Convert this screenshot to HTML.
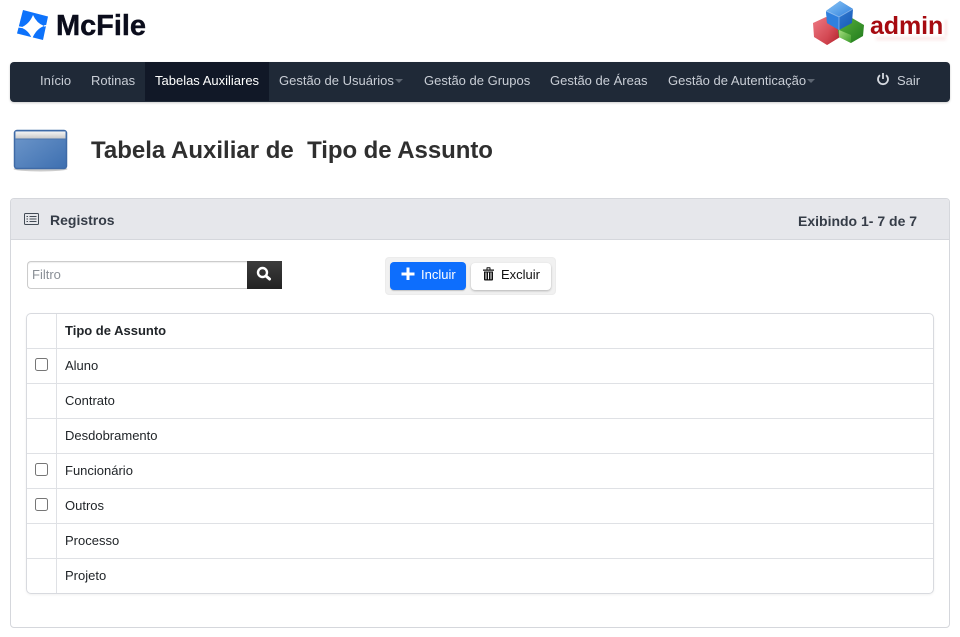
<!DOCTYPE html>
<html lang="pt"><head><meta charset="utf-8"><title>Tabela Auxiliar</title>
<style>
*{box-sizing:border-box}
html,body{margin:0;padding:0;width:960px;height:637px;overflow:hidden;background:#fff;font-family:"Liberation Sans",Arial,sans-serif;color:#212529}
.a{position:absolute;white-space:nowrap}
.nav{left:10px;top:62px;width:940px;height:40px;background:#1f2937;border-radius:4px;box-shadow:0 1px 2px rgba(0,0,0,.2)}
.n{top:62px;height:38px;line-height:37px;font-size:13px;color:#c9ced6}
.caret{display:inline-block;width:0;height:0;border:4.500px solid transparent;border-top:4px solid #5d6672;border-bottom:0;vertical-align:2px;margin-left:1px}
.panel{left:10px;top:198px;width:940px;height:430px;border:1px solid #d5d7dc;border-radius:4px}
.phead{left:11px;top:199px;width:938px;height:41px;background:#e6e7eb;border-bottom:1px solid #d5d7dc;border-radius:3px 3px 0 0}
.tbl{left:26px;top:313px;width:908px;height:281px;border:1px solid #d8dadf;border-radius:5px;box-shadow:0 1px 2px rgba(0,0,0,.06)}
.l{left:27px;width:906px;height:1px;background:#dfe1e5}
.c{left:65px;font-size:13px;line-height:16px;color:#212529}
.cb{left:35px;width:13px;height:13px;border:1px solid #767676;border-radius:2.500px;background:#fff}
</style></head><body>

<svg class="a" style="left:16px;top:9px" width="33" height="33" viewBox="0 0 33 33">
<path fill="#0d72fb" d="M7 1 L32 7.500 L27 31 L1 24.500 Z"/>
<path fill="#fff" d="M17 6 Q20.500 14 28 17 Q20 20 16 30 Q13 21.500 5 18.500 Q13.500 15 17 6 Z"/>
<path fill="none" stroke="#fff" stroke-width="1.200" d="M0 17.500 L6 18.500 M16 30 L15 33 M28 17 L33 16"/>
</svg>
<div class="a" style="left:56px;top:10px;font-size:29px;line-height:32px;font-weight:700;color:#0b0d1c;letter-spacing:-.05px;-webkit-text-stroke:.4px #0b0d1c">McFile</div>

<svg class="a" style="left:811px;top:0" width="58" height="47" viewBox="0 0 58 47">
<defs>
<linearGradient id="r" x1="0" y1="0" x2="1" y2="1"><stop offset="0" stop-color="#ee7a84"/><stop offset="1" stop-color="#c22a35"/></linearGradient>
<linearGradient id="r2" x1="0" y1="0" x2="1" y2="1"><stop offset="0" stop-color="#e35c66"/><stop offset="1" stop-color="#b01f2a"/></linearGradient>
<linearGradient id="g" x1="0" y1="0" x2="1" y2="1"><stop offset="0" stop-color="#a4dc7e"/><stop offset="1" stop-color="#3c9c2a"/></linearGradient>
<linearGradient id="g2" x1="0" y1="0" x2="1" y2="1"><stop offset="0" stop-color="#5bb23e"/><stop offset="1" stop-color="#1f7a1c"/></linearGradient>
<linearGradient id="b" x1="0" y1="0" x2="1" y2="1"><stop offset="0" stop-color="#8cc6f5"/><stop offset="1" stop-color="#2f80de"/></linearGradient>
<linearGradient id="b2" x1="0" y1="0" x2="1" y2="1"><stop offset="0" stop-color="#3f8fe4"/><stop offset="1" stop-color="#1758b4"/></linearGradient>
</defs>
<path fill="url(#r)" d="M2 23 L15 17 L29 24 L29 37 L16 45 L3 37 Z"/>
<path fill="url(#r2)" d="M16 31 L29 24 L29 37 L16 45 Z"/>
<path fill="url(#g2)" d="M27 30 L41 18 L53 25 L52 36 L40 43 L28 37 Z"/>
<path fill="url(#g)" d="M28 30 L40 35 L40 43 L28 37 Z"/>
<path fill="url(#b2)" d="M15 11 L29 1 L42 9 L41 23 L28 30 L16 23 Z"/>
<path fill="url(#b)" d="M15 11 L29 1 L42 9 L28 17 Z"/>
<path fill="#2f80de" d="M15 11 L28 17 L28 30 L16 23 Z"/>
<path fill="none" stroke="#fff" stroke-opacity=".35" d="M15 11 L28 17 L42 9 M28 17 V30"/>
</svg>
<div class="a" style="left:876px;top:37px;width:70px;height:3px;background:#f6c9c9;filter:blur(1.500px);opacity:.5"></div>
<div class="a" style="left:945px;top:20px;width:2px;height:16px;background:#f6c9c9;filter:blur(1px);opacity:.5"></div>
<div class="a" style="left:870px;top:10px;font-size:25px;line-height:32px;font-weight:700;color:#a60a10;letter-spacing:-.1px">admin</div>

<div class="a nav"></div>
<div class="a" style="left:145px;top:62px;width:124px;height:39px;background:#111827"></div>
<div class="a n" style="left:40px">Início</div>
<div class="a n" style="left:91px">Rotinas</div>
<div class="a n" style="left:155px;color:#fff">Tabelas Auxiliares</div>
<div class="a n" style="left:279px">Gestão de Usuários<span class="caret"></span></div>
<div class="a n" style="left:424px">Gestão de Grupos</div>
<div class="a n" style="left:550px">Gestão de Áreas</div>
<div class="a n" style="left:668px">Gestão de Autenticação<span class="caret"></span></div>
<svg class="a" style="left:876px;top:72px" width="14" height="14" viewBox="0 0 14 14" fill="none" stroke="#d5d9df" stroke-width="1.800"><path d="M4 3.200 A5 5 0 1 0 10 3.200"/><path d="M7 1 V7"/></svg>
<div class="a n" style="left:897px">Sair</div>

<svg class="a" style="left:12px;top:128px" width="57" height="44" viewBox="0 0 57 44">
<defs>
<linearGradient id="w" x1="0" y1="0" x2="1" y2="1"><stop offset="0" stop-color="#6f98cb"/><stop offset="1" stop-color="#3d6fb0"/></linearGradient>
<linearGradient id="t" x1="0" y1="0" x2="0" y2="1"><stop offset="0" stop-color="#f4f4f4"/><stop offset="1" stop-color="#c9c9c9"/></linearGradient>
</defs>
<ellipse cx="28.500" cy="41" rx="27" ry="2.500" fill="#aaa" opacity=".6"/>
<rect x="2.500" y="2.500" width="52" height="38" rx="2.500" fill="url(#w)" stroke="#3f6aa6" stroke-width="1.500"/>
<rect x="3.500" y="3.500" width="50" height="7" fill="url(#t)"/>
<path d="M3.500 11 H53.500" stroke="#4a74ae"/>
</svg>
<div class="a" style="left:91px;top:136px;font-size:24px;line-height:30px;font-weight:700;color:#2f2f2f;white-space:pre">Tabela Auxiliar de  <span style="letter-spacing:-.06px">Tipo de Assunto</span></div>

<div class="a panel"></div>
<div class="a phead"></div>
<svg class="a" style="left:24px;top:213px" width="15" height="12" viewBox="0 0 15 12" fill="none" stroke="#444c56"><rect x=".5" y=".5" width="14" height="11" rx="1"/><path d="M2.500 3.500H4M2.500 6H4M2.500 8.500H4M5.500 3.500H12.500M5.500 6H12.500M5.500 8.500H12.500"/></svg>
<div class="a" style="left:50px;top:212px;font-size:14px;line-height:16px;font-weight:700;color:#353c47">Registros</div>
<div class="a" style="left:798px;top:213px;font-size:14px;line-height:16px;font-weight:700;color:#353c47">Exibindo 1- 7 de 7</div>

<div class="a" style="left:27px;top:261px;width:221px;height:28px;border:1px solid #ccc;border-right:0;border-radius:4px 0 0 4px;background:#fff;font-size:13px;line-height:25px;padding-left:4px;color:#8a8f96;box-shadow:inset 0 1px 1px rgba(0,0,0,.07)">Filtro</div>
<div class="a" style="left:247px;top:261px;width:35px;height:28px;background:linear-gradient(#3c3c3c,#222)"></div>
<svg class="a" style="left:256px;top:266px" width="16" height="15" viewBox="0 0 16 15" fill="none"><circle cx="6.500" cy="6.500" r="4.500" stroke="#fff" stroke-width="2.400"/><path d="M10 10 L13.500 13" stroke="#fff" stroke-width="3" stroke-linecap="round"/></svg>

<div class="a" style="left:385px;top:257px;width:171px;height:38px;background:#f1f1f1;border:1px solid #ececec;border-radius:4px"></div>
<div class="a" style="left:390px;top:262px;width:76px;height:28px;background:#0d6efd;border-radius:4px;box-shadow:0 1px 1px rgba(0,0,0,.2)"></div>
<svg class="a" style="left:401px;top:267px" width="14" height="14" viewBox="0 0 14 14"><path d="M7 .5V13M.5 7H13.500" stroke="#fff" stroke-width="3"/></svg>
<div class="a" style="left:421px;top:267px;font-size:13px;line-height:16px;color:#fff">Incluir</div>
<div class="a" style="left:471px;top:263px;width:80px;height:27px;background:#fff;border-radius:4px;box-shadow:0 1px 2px rgba(0,0,0,.25)"></div>
<svg class="a" style="left:482px;top:267px" width="13" height="14" viewBox="0 0 13 14" fill="#111"><path d="M1 2.500H4.500V1Q4.500 .3 5.200 .3H7.800Q8.500 .3 8.500 1V2.500H12V3.800H1ZM5.500 1.300V2.500H7.500V1.300ZM2 4.500H11V12.500Q11 13.500 10 13.500H3Q2 13.500 2 12.500ZM3.500 5.500V12.300H4.500V5.500ZM6 5.500V12.300H7V5.500ZM8.500 5.500V12.300H9.500V5.500Z" fill-rule="evenodd"/></svg>
<div class="a" style="left:501px;top:267px;font-size:13px;line-height:16px;color:#111">Excluir</div>

<div class="a tbl"></div>
<div class="a" style="left:56px;top:314px;width:1px;height:279px;background:#dfe1e5"></div>
<div class="a l" style="top:348px"></div>
<div class="a l" style="top:383px"></div>
<div class="a l" style="top:418px"></div>
<div class="a l" style="top:453px"></div>
<div class="a l" style="top:488px"></div>
<div class="a l" style="top:523px"></div>
<div class="a l" style="top:558px"></div>
<div class="a c" style="top:323px;font-weight:700">Tipo de Assunto</div>
<div class="a cb" style="top:358px"></div>
<div class="a cb" style="top:463px"></div>
<div class="a cb" style="top:498px"></div>
<div class="a c" style="top:358px">Aluno</div>
<div class="a c" style="top:393px">Contrato</div>
<div class="a c" style="top:428px">Desdobramento</div>
<div class="a c" style="top:463px">Funcionário</div>
<div class="a c" style="top:498px">Outros</div>
<div class="a c" style="top:533px">Processo</div>
<div class="a c" style="top:568px">Projeto</div>
</body></html>
